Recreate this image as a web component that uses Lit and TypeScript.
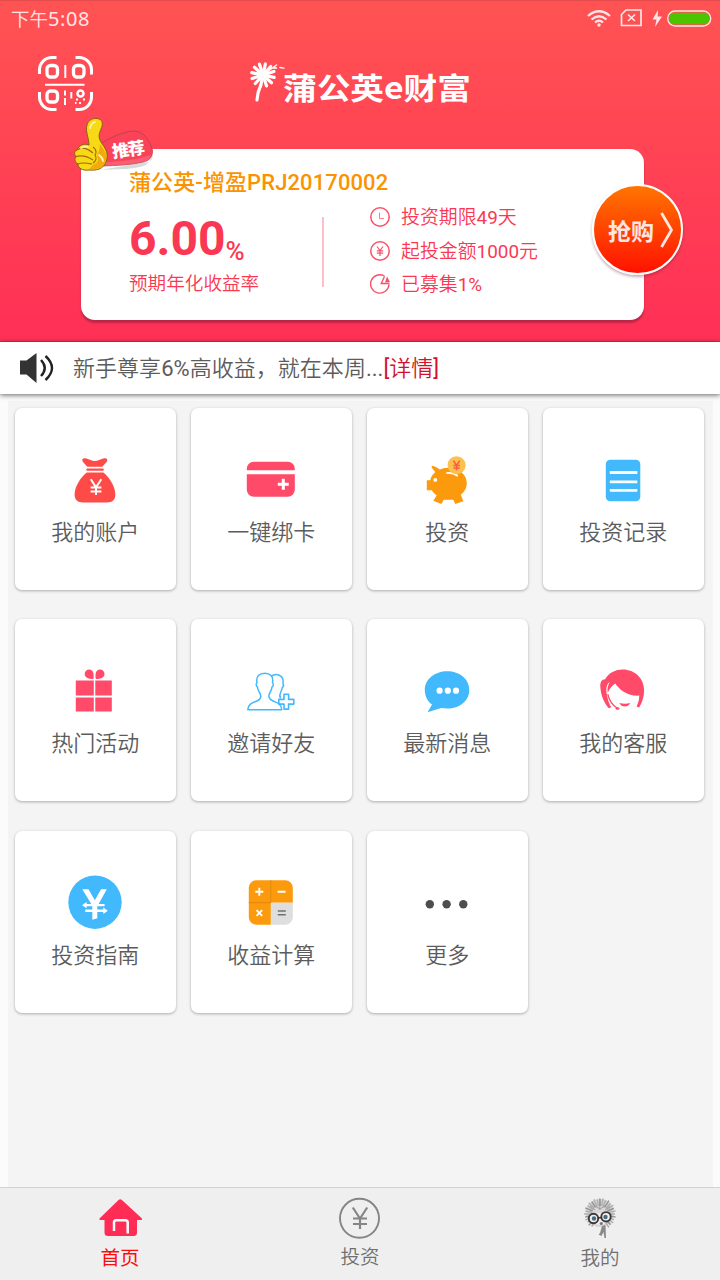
import { LitElement, html, css, svg } from 'lit';
import { customElement, property } from 'lit/decorators.js';

const RED = '#ff4a6a';
const BLUE = '#42b9fd';
const ORANGE = '#fb9a0c';

// Each tile glyph is drawn on an 80x60 canvas whose centre is (40, 30).
const glyphs: Record<string, unknown> = {
  bag: svg`
    <path fill="#ff4b47" d="M28 13.5c-1.500-3 0.500-4 3.500-3.300 3 0.700 5.500 2.600 8.500 2.600s5.500-1.900 8.500-2.600c3-0.700 5 0.300 3.500 3.300l-4.500 5H32.500z"/>
    <rect fill="#ff4b47" x="31.500" y="20.300" width="17.500" height="2.200" rx="1"/>
    <path fill="#ff4b47" d="M32 24.300h16.500C54 28.500 60.500 38 60.500 46c0 6-3 8.200-8.500 8.200H28.500c-5.500 0-8.700-2.200-8.700-8.200 0-8 6.700-17.500 12.200-21.700z"/>
    <path fill="none" stroke="#fff" stroke-width="2" d="M36 31l5.200 8.200L46.500 31M41.200 39v7.800M35.800 39.200h10.800M35.800 43.200h10.800"/>`,
  card: svg`
    <path fill="${RED}" d="M16 22v-1.500a7 7 0 0 1 7-7h34a7 7 0 0 1 7 7V22zM16 26h48v15.500a7 7 0 0 1-7 7H23a7 7 0 0 1-7-7z"/>
    <path stroke="#fff" stroke-width="3" d="M52.500 30.500v11M47 36h11"/>`,
  pig: svg`
    <ellipse cx="41.500" cy="35" rx="18.500" ry="15.500" fill="${ORANGE}"/>
    <path fill="${ORANGE}" d="M25 19.500q-.8-2.500 1.500-1.800 3 .6 6 3.300l8 5-8 10-5.500-5-2.500 1h-4.500v10h6l4 5-3.500 5.500 8 3.200 2.500-4.200h9.500l2 4.200 8-2.700-2.500-6.500-14-20-11 1.500 .5-3z"/>
    <circle cx="28.500" cy="31.700" r="1.900" fill="#fff"/>
    <path fill="none" stroke="#fff" stroke-width="1.600" d="M39.500 24.800q6.500-.8 11.500 3"/>
    <circle cx="49.800" cy="17" r="9" fill="#fcc04e"/>
    <path fill="none" stroke="#ff5a45" stroke-width="1.500" d="M46.600 12.500l3.200 4.600 3.200-4.600M49.800 17v5M46.600 17.300h6.400M46.600 19.700h6.400"/>`,
  records: svg`
    <rect x="23" y="11.500" width="34.500" height="41.500" rx="4.500" fill="${BLUE}"/>
    <path stroke="#fff" stroke-width="2.800" d="M27 24.300h27.500M27 33.700h27.500M27 42.200h27.500"/>`,
  gift: svg`
    <path fill="${RED}" d="M21 21.300h18v15H21zM40.500 21.300H57v15H40.500zM21 38.300h18v14H21zM40.500 38.300H57v14H40.500zM38.700 19.500c-5 .8-8.800-1.200-8.800-4.700 0-2.700 2-4.500 4.600-4.500 3.600 0 5 3.700 4.200 9.200zM40.900 19.500c5 .8 8.800-1.200 8.800-4.700 0-2.700-2-4.500-4.600-4.500-3.600 0-5 3.700-4.200 9.200z"/>`,
  friends: svg`
    <path fill="none" stroke="${BLUE}" stroke-width="1.500" stroke-linejoin="round" d="M17 50.500c.4-6 5-7 9.200-8.700 4.500-1.800 4.500-5.300 2.500-8.500-1.400-2-1.800-3.200-2-5.500-1.700-1-1.500-3.500-.5-4.500-1.300-6 2.500-9.300 7.800-9.300s9 3.300 7.700 9.300c1 1 1.200 3.500-.5 4.500-.2 2.300-.8 3.500-2 5.500-2 3.500-1.500 6.500 3 8.500s8 2.700 8.800 8.700z"/>
    <path fill="none" stroke="${BLUE}" stroke-width="1.500" d="M40 17.200c4-2.700 8-2 10.500.2 2 2 2.200 4 1.700 7 .8 1.500.5 3.200-.8 4-.3 2-.8 3.300-1.700 5.200-1 2-1 3.500 0 5.300"/>
    <path fill="none" stroke="${BLUE}" stroke-width="1.600" stroke-linejoin="round" d="M53.200 35h4.600v5.200h5.200v4.700h-5.200v5h-4.600v-5H48v-4.700h5.200z"/>`,
  message: svg`
    <path fill="${BLUE}" d="M40.500 12c12.500 0 22 8 22 18.700S53 49.300 40.500 49.300c-2 0-4-.2-6-.5L20.700 53l4.500-7.800C20.500 42 18 36.500 18 30.700 18 20 28 12 40.500 12z"/>
    <circle cx="32.800" cy="31.500" r="3.100" fill="#fff"/><circle cx="41" cy="31.500" r="3.100" fill="#fff"/><circle cx="49.200" cy="31.500" r="3.100" fill="#fff"/>`,
  service: svg`
    <path fill="${RED}" d="M22.300 20C26 13.500 32.500 10.200 40 10.200c12 0 21.300 8.800 21.300 21 0 6.500-2 12-5 17l-2.500-.8c2-4 2.700-7.500 2.600-11C45 37 37 31 32.400 24.300c-3.500 2.700-6 5.500-7.500 9.500-.8-4 .3-8 2-11-4 2.500-3.800 9-2.500 14 .8 4.500 2 8 4 11.300l-2.500 1C21 43 18 36 17.500 27.500c-.2-4.500 1.300-7.500 4.800-7.500z"/>
    <path fill="none" stroke="${RED}" stroke-width="1.300" d="M25 35C26.500 42 29.500 46 34.500 49"/>
    <ellipse cx="34.700" cy="49.300" rx="2" ry="1.200" fill="${RED}"/>
    <path fill="${RED}" d="M36.500 43.800q5.500 1.500 11 0-2 3.500-5.500 3.500t-5.500-3.500z"/>`,
  guide: svg`
    <circle cx="40.200" cy="31" r="26.700" fill="${BLUE}"/>
    <path fill="#fff" d="M27.500 18h6.200l6.300 11 6.300-11H52l-8.200 14.700h6v2.300h-7.300v3.200h6v-2l4.500 3.300-4.500 3.300v-2h-6V47l-5 1.500v-7.700h-7v-2.600h7V35h-5.700v2L27.200 34l4.600-3.300v2h4.700z"/>`,
  calculator: svg`
    <path fill="${ORANGE}" d="M25.500 9H40v44.500H25.500a7.500 7.500 0 0 1-7.500-7.500V16.500A7.500 7.500 0 0 1 25.500 9z"/>
    <path fill="${ORANGE}" d="M40 9h14.500a7.500 7.500 0 0 1 7.500 7.500v15H40z"/>
    <path fill="#dedede" d="M40.300 31.500H62V46a7.500 7.500 0 0 1-7.500 7.500H40.300z"/>
    <path stroke="#e28708" stroke-width="1" d="M40 9v22.500M18 31.500h22"/>
    <path stroke="#fff" stroke-width="1.900" d="M24.500 20.500h8M28.500 16.500v8M46.800 20.500h8M25.700 39l5.700 5.700M31.400 39l-5.700 5.700"/>
    <path stroke="#707070" stroke-width="1.600" d="M47 39.800h8M47 43.600h8"/>`,
  more: svg`
    <circle cx="23" cy="33" r="4.200" fill="#4d4d4d"/><circle cx="39.800" cy="33" r="4.200" fill="#4d4d4d"/><circle cx="56.500" cy="33" r="4.200" fill="#4d4d4d"/>`,
};

@customElement('menu-tile')
class MenuTile extends LitElement {
  @property() icon = '';
  @property() label = '';

  static styles = css`
    :host {
      display: flex;
      flex-direction: column;
      align-items: center;
      box-sizing: border-box;
      height: 182px;
      padding-top: 40px;
      background: #fff;
      border-radius: 7px;
      box-shadow: 0 1px 3px rgba(0, 0, 0, 0.3);
    }
    .icon { width: 80px; height: 60px; display: block; }
    .label { margin-top: 10px; font-size: 22px; font-weight: 350; line-height: 30px; color: #5c5c5c; white-space: nowrap; }
  `;

  render() {
    return html`
      <svg class="icon" viewBox="0.200 -0.200 80 60">${glyphs[this.icon]}</svg>
      <div class="label">${this.label}</div>`;
  }
}

@customElement('app-root')
class AppRoot extends LitElement {
  private tiles = [
    ['bag', '我的账户'], ['card', '一键绑卡'], ['pig', '投资'], ['records', '投资记录'],
    ['gift', '热门活动'], ['friends', '邀请好友'], ['message', '最新消息'], ['service', '我的客服'],
    ['guide', '投资指南'], ['calculator', '收益计算'], ['more', '更多'],
  ];

  static styles = css`
    :host {
      display: flex;
      flex-direction: column;
      width: 720px;
      height: 1280px;
      overflow: hidden;
      background: #fbfbfb;
      font-family: Roboto, 'Noto Sans CJK SC', sans-serif;
    }
    svg { display: block; }
    .header {
      height: 342px;
      flex: none;
      box-sizing: border-box;
      background: linear-gradient(#ff5353, #ff3056);
      border-top: 1px solid #e54b4c;
      border-bottom: 1px solid #e42c4e;
    }
    .status {
      display: flex;
      align-items: center;
      justify-content: space-between;
      height: 36px;
      padding: 0 8px 0 11px;
      color: #ffe6e6;
    }
    .time { font: 350 18.500px/35px 'Noto Sans CJK SC', sans-serif; height: 36px; }
    .digits { font-family: 'Noto Sans', sans-serif; font-weight: 400; font-size: 20px; letter-spacing: 0.600px; }
    .topbar { display: flex; height: 111.500px; padding-left: 37px; box-sizing: border-box; }
    .scan { margin-top: 18px; }
    .logo { margin: 19px 0 0 151px; }
    .brand { font-family: 'Noto Sans CJK SC', sans-serif; font-weight: 700; font-size: 30px; fill: #fff; }
    .offer {
      position: relative;
      box-sizing: border-box;
      width: 562.500px;
      height: 171px;
      margin-left: 81px;
      padding: 20px 0 0 48px;
      background: #fff;
      border-radius: 14px;
      box-shadow: 0 3px 2px rgba(165, 35, 65, 0.75);
      color: #fb3853;
    }
    .badge { position: absolute; left: -10px; top: -34px; }
    .badge-text { font-family: 'Noto Sans CJK SC', sans-serif; font-weight: 900; font-size: 17px; fill: #fff; }
    .offer-title { font-size: 22px; line-height: 28px; height: 28.500px; font-weight: 500; color: #fb9300; letter-spacing: 0.100px; }
    .offer-body { display: flex; }
    .rate { width: 193px; }
    .rate-value { display: flex; height: 73px; font-weight: 700; }
    .rate-number { font-size: 48px; line-height: 83px; }
    .rate-unit { font-size: 26px; line-height: 108px; font-weight: 500; }
    .rate-label { font-size: 18.600px; font-weight: 350; line-height: 28px; }
    .divider { width: 2px; height: 70px; margin-top: 20px; background: #ffbfc8; }
    .facts { padding: 3.500px 0 0 46px; }
    .fact { display: flex; align-items: center; height: 33.500px; gap: 11px; font-size: 18.900px; font-weight: 350; white-space: nowrap; }
    .fact span { height: 24px; line-height: 25px; }
    .latin { font-weight: 400; }
    .buy {
      position: absolute;
      left: 511px;
      top: 35.500px;
      display: flex;
      align-items: center;
      box-sizing: border-box;
      width: 91px;
      height: 91px;
      padding-left: 14px;
      gap: 6px;
      border: 2.500px solid #fff;
      border-radius: 50%;
      background: linear-gradient(#ff7500, #ff1200);
      box-shadow: 0 2px 3px rgba(90, 20, 40, 0.35);
      color: #ffe6e2;
      font-size: 23px;
      font-weight: 700;
      white-space: nowrap;
    }
    .notice {
      position: relative;
      display: flex;
      align-items: center;
      flex: none;
      height: 51.500px;
      padding-left: 19px;
      background: #fff;
      box-shadow: 0 1px 5px rgba(0, 0, 0, 0.6);
      font-size: 22px;
      font-weight: 350;
      color: #5c5c5c;
    }
    .notice-text { margin-left: 18px; height: 30px; line-height: 31px; white-space: nowrap; letter-spacing: 0.030px; }
    .detail { color: #d0122d; }
    .content {
      flex: 1;
      box-sizing: border-box;
      margin: 7px 7.500px 0;
      padding: 7px;
      background: #f4f4f4;
    }
    .grid { display: grid; grid-template-columns: repeat(4, 161.500px); column-gap: 14.500px; row-gap: 29.500px; }
    .nav {
      display: grid;
      grid-template-columns: repeat(3, 1fr);
      flex: none;
      box-sizing: border-box;
      height: 93px;
      border-top: 1px solid #d2d2d2;
      background: #efefef;
    }
    .tab { display: flex; flex-direction: column; align-items: center; padding-top: 6px; color: #707070; font-size: 19.500px; font-weight: 350; line-height: 28px; }
    .tab svg { margin-bottom: 3px; }
    .active { color: #fe0b0b; font-weight: 400; }
  `;

  private scanIcon() {
    return html`<svg class="scan" width="57" height="57" viewBox="0 0 57 57" fill="none" stroke="#fff">
      <path stroke-width="3" d="M2.500 19v-4A12.500 12.500 0 0 1 15 2.500h4.500M38.500 2.500H42A12.500 12.500 0 0 1 54.500 15v4.500M54.500 37v5A12.500 12.500 0 0 1 42 54.500h-3.500M19.500 54.500H15A12.500 12.500 0 0 1 2.500 42v-5"/>
      <rect x="10" y="10.500" width="10.500" height="11.500" rx="3.500" stroke-width="3.300"/>
      <rect x="36.500" y="10.500" width="10.500" height="11.500" rx="3.500" stroke-width="3.300"/>
      <rect x="10" y="36" width="10.500" height="11" rx="3.500" stroke-width="3.300"/>
      <path stroke-width="2" d="M28.300 10v13M8 29.700h39.500M28 35.500v5M28 43v7M34.300 37v6.500"/>
      <circle cx="43.500" cy="38.500" r="3" stroke-width="2.500"/>
      <path stroke-width="2" d="M39 44.500h2M46 44.500h2M42 48h2M38 48h1.500"/>
    </svg>`;
  }

  private logo() {
    const petals = [0, 30, 60, 90, 120, 150, 180, 210, 240, 270, 300, 330];
    return html`<svg class="logo" width="230" height="52" viewBox="245 57 230 52">
      <g stroke="#fff" stroke-linecap="round">
        ${petals.map((a) => svg`<line x1="263" y1="73" x2="263" y2="64.500" stroke-width="3.200" transform="rotate(${a + 12} 263 76)"/>`)}
        <path fill="none" stroke-width="1.300" d="M263 76l13.500-10M273.500 69h3M280 68.500l4 .6"/>
        <path fill="none" stroke-width="3.200" d="M260.500 87q-3 6-3.500 14"/>
      </g>
      <circle cx="263" cy="76" r="3" fill="#fff"/>
      <text class="brand" x="283" y="100" textLength="188" lengthAdjust="spacingAndGlyphs">蒲公英e财富</text>
    </svg>`;
  }

  private badge() {
    return html`<svg class="badge" width="86" height="60" viewBox="72 114 86 60">
      <path fill="rgba(0,0,0,.15)" d="M100 169c18-1 40 0 48-6 5-4 6-6 6-10l-4 8z"/>
      <path fill="#fb4259" stroke="#a9444c" stroke-width=".8" d="M100 144c8-6 19-11 30-13.500 8-1.500 14 1 18 7 3 4.500 6 11 5.500 14-1 5-3 8-9 9.500-12 3-28 3.500-41 4z"/>
      <path fill="#fff" opacity=".15" d="M104 161c14 0 32-2 48-7-2 4-4 6-8 7-12 3-27 3.500-40 3.500z"/>
      <path fill="#f7d915" stroke="#88620e" stroke-width="1" d="M90 144c0-7-4-14-2-20 1-5 7-8 12-6 4 1 4 6 2 10-2 5-3 8 0 13 4 6 7 10 6 16-1 9-8 13-17 12-8 1-12-2-12-6-3-2-4-5-2-7-2-3-2-6 1-7 2-5 7-7 12-5z"/>
      <path fill="#f19c0f" opacity=".8" d="M101 143c4 6 8 11 6 16-2 7-8 10-17 9l5-5c4-1 5-5 3-9 2-3 3-7 3-11z"/>
      <path fill="none" stroke="#a8690b" stroke-width="1.200" d="M78 149c4-3 10-2 16 3M76 156c5-2 12-1 18 3M79 163c5-2 9-1 14 0M94 146c3 2 4 6 2 8 2 3 1 6-2 8"/>
      <path fill="none" stroke="#fff5a6" stroke-width="1.800" stroke-linecap="round" d="M91 127q1-5 5-6M82 147q3-2 7-1M100 154q4 3 4 6"/>
      <text class="badge-text" x="114" y="157" transform="rotate(-8 114 157)" textLength="33">推荐</text>
    </svg>`;
  }

  render() {
    return html`
      <div class="header">
        <div class="status">
          <div class="time">下午<span class="digits">5:08</span></div>
          <svg width="126" height="22" viewBox="586 8 126 22" fill="none" stroke="#ffe6e6">
            <path stroke-width="2.200" d="M588 16q11-9.500 22 0M591.500 19.500q7.500-6.500 15 0M595 22.500q4-3.500 8 0"/>
            <circle cx="599" cy="25" r="1.700" fill="#ffe6e6" stroke="none"/>
            <path stroke-width="1.700" d="M626 10h15v15.500h-19.500V14.500zM628 14.500l7 6.500M635 14.500l-7 6.500"/>
            <path fill="#ffe6e6" stroke="none" d="M658 10l-5.500 9.500h4l-1.500 7.500 7-10.500h-4.300z"/>
            <rect x="667.700" y="11" width="43" height="15" rx="7.500" stroke-width="1.300"/>
            <rect x="669" y="12.700" width="40.300" height="11.600" rx="5" fill="#4bc500" stroke="none"/>
          </svg>
        </div>
        <div class="topbar">${this.scanIcon()}${this.logo()}</div>
        <div class="offer">
          ${this.badge()}
          <div class="offer-title">蒲公英-增盈PRJ20170002</div>
          <div class="offer-body">
            <div class="rate">
              <div class="rate-value"><span class="rate-number">6.00</span><span class="rate-unit">%</span></div>
              <div class="rate-label">预期年化收益率</div>
            </div>
            <div class="divider"></div>
            <div class="facts">
              <div class="fact">
                <svg width="20" height="20" viewBox="0 0 20 20" fill="none" stroke="#fb5069"><circle cx="10" cy="10" r="9.200" stroke-width="1.500"/><path d="M9.500 5.500v6h4.500" opacity=".75"/></svg>
                <span>投资期限<b class="latin">49</b>天</span>
              </div>
              <div class="fact">
                <svg width="20" height="20" viewBox="0 0 20 20" fill="none" stroke="#fb5069"><circle cx="10" cy="10" r="9.200" stroke-width="1.500"/><path stroke-width="1.200" d="M7 5.500l3 4 3-4M10 9.500v5.500M6.800 9.800h6.400M6.800 12.200h6.400"/></svg>
                <span>起投金额<b class="latin">1000</b>元</span>
              </div>
              <div class="fact">
                <svg width="20" height="20" viewBox="0 0 20 20" fill="none" stroke="#fb5069"><path stroke-width="1.400" d="M14.500 2A9.200 9.200 0 1 0 19 10.500M14.500 2.500l-3 6.500M10.500 9.500H19.500"/><path fill="#fb5069" stroke="none" d="M17 2.500l3 5.500-5 .5z"/></svg>
                <span>已募集<b class="latin">1%</b></span>
              </div>
            </div>
          </div>
          <div class="buy">抢购<svg width="14" height="36" viewBox="0 0 14 36" fill="none" stroke="#ffe6e2" stroke-width="2.800"><path d="M1.500 1l10 17-10 17"/></svg></div>
        </div>
      </div>
      <div class="notice">
        <svg width="36" height="32" viewBox="0 0 36 32">
          <path fill="#333" d="M1 8.500h6.500L17.500 1v30L7.500 22.500H1z"/>
          <path fill="none" stroke="#222" stroke-width="2.400" d="M22 8q7.500 8 0 16M26.500 4q13 12 0 24"/>
        </svg>
        <div class="notice-text">新手尊享<b class="latin">6%</b>高收益，就在本周<b class="latin">...</b><span class="detail"><b class="latin">[</b>详情<b class="latin">]</b></span></div>
      </div>
      <div class="content">
        <div class="grid">
          ${this.tiles.map(([icon, label]) => html`<menu-tile .icon=${icon} .label=${label}></menu-tile>`)}
        </div>
      </div>
      <div class="nav">
        <div class="tab active">
          <svg width="48" height="48" viewBox="96 1194 48 48">
            <path fill="#ff2d55" d="M118.500 1200q1.700-1.300 3.400 0L142 1218.500q.5 1.500-1 1.500h-4v12.500q0 3.500-3.500 3.500H108q-3.500 0-3.500-3.500V1220h-4q-2-.3-1-1.500z"/>
            <path fill="none" stroke="#fff" stroke-width="2.500" d="M114 1231v-8.500q0-2.300 2.300-2.300h9q2.400 0 2.400 2.300v11"/>
          </svg>
          首页
        </div>
        <div class="tab">
          <svg width="48" height="47" viewBox="336 1194 48 47" fill="none" stroke="#858585">
            <circle cx="359.500" cy="1218.300" r="19.500" stroke-width="1.900"/>
            <path stroke-width="2.200" d="M352.800 1207.500l7.200 11 7.200-11M360 1218.500v10.500M353 1218.500h14M353 1224h14"/>
          </svg>
          投资
        </div>
        <div class="tab">
          <svg width="48" height="48" viewBox="576 1194 48 48" fill="none">
            <circle cx="600" cy="1213" r="14" fill="#d8d8d8"/>
            ${Array.from({ length: 32 }, (_, i) => i * 11.250).filter((a) => a < 148 || a > 212).map((a, i) => svg`<line x1="600" y1="1206" x2="600" y2="${i % 2 ? 1198 : 1199}" stroke="${i % 3 ? '#b0b0b0' : '#949494'}" stroke-width="1.500" transform="rotate(${a} 600 1214)"/>`)}
            <path stroke="#999" stroke-width=".9" d="M599.800 1198v12M595 1206l5 3 5-3M590 1206l5 4M610 1206l-5 4"/>
            <ellipse cx="600.500" cy="1219" rx="7" ry="6" fill="#efefef"/>
            <circle cx="593.500" cy="1218.500" r="4.700" fill="#eef2f4" stroke="#403736" stroke-width="1.900"/>
            <circle cx="606" cy="1216.800" r="4.700" fill="#eef2f4" stroke="#403736" stroke-width="1.900"/>
            <path stroke="#403736" stroke-width="1.500" d="M598 1218l3.500-.6"/>
            <circle cx="594" cy="1218.500" r="2.200" fill="#496b80"/><circle cx="605.500" cy="1217" r="2.200" fill="#496b80"/>
            <circle cx="601.300" cy="1223.500" r="1.600" fill="#777"/>
            <path fill="#8a8a8a" d="M602 1226l3.500-1 .5 13h-1.500l-1-6-2 4-3-1.500 1.500-1.500z"/>
          </svg>
          我的
        </div>
      </div>`;
  }
}
